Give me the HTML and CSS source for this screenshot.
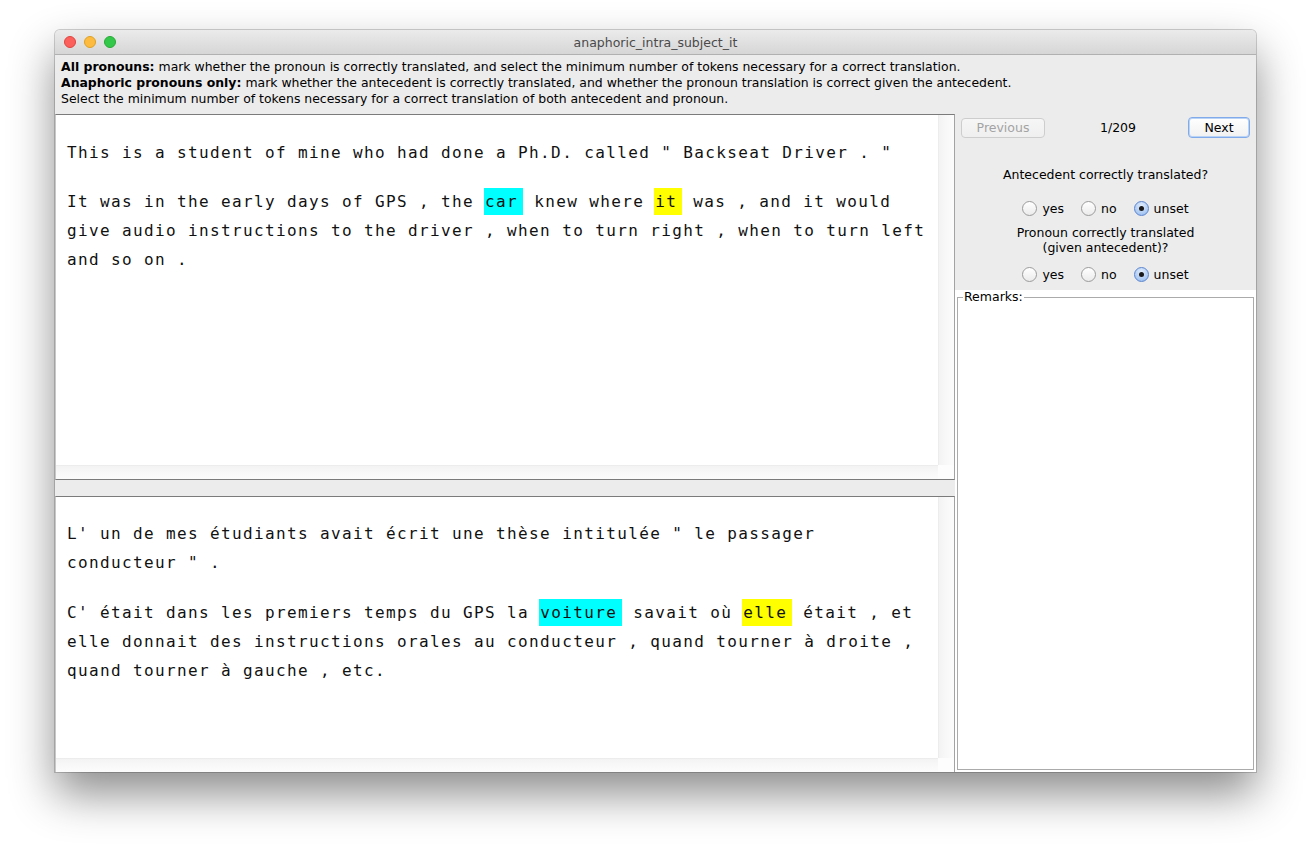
FILE: index.html
```html
<!DOCTYPE html>
<html>
<head>
<meta charset="utf-8">
<title>anaphoric_intra_subject_it</title>
<link rel="stylesheet" href="styles.css">
</head>
<body>
<div class="window">
  <div class="titlebar">
    <div class="lights">
      <span class="light red"></span>
      <span class="light yellow"></span>
      <span class="light green"></span>
    </div>
    <div class="title">anaphoric_intra_subject_it</div>
  </div>
  <div class="instructions">
    <div><b>All pronouns:</b> mark whether the pronoun is correctly translated, and select the minimum number of tokens necessary for a correct translation.</div>
    <div><b>Anaphoric pronouns only:</b> mark whether the antecedent is correctly translated, and whether the pronoun translation is correct given the antecedent.</div>
    <div>Select the minimum number of tokens necessary for a correct translation of both antecedent and pronoun.</div>
  </div>
  <div class="main">
    <div class="left">
      <div class="pane pane-top">
        <div class="pane-view">
          <div class="text text-top">
            <p>This is a student of mine who had done a Ph.D. called " Backseat Driver . "</p>
            <p>It was in the early days of GPS , the <span class="hl ante">car</span> knew where <span class="hl pron">it</span> was , and it would give audio instructions to the driver , when to turn right , when to turn left and so on .</p>
          </div>
        </div>
        <div class="vtrack"></div>
        <div class="htrack"></div>
        <div class="corner"></div>
      </div>
      <div class="divider"></div>
      <div class="pane pane-bottom">
        <div class="pane-view">
          <div class="text text-bottom">
            <p>L' un de mes étudiants avait écrit une thèse intitulée " le passager conducteur " .</p>
            <p>C' était dans les premiers temps du GPS la <span class="hl ante">voiture</span> savait où <span class="hl pron">elle</span> était , et elle donnait des instructions orales au conducteur , quand tourner à droite , quand tourner à gauche , etc.</p>
          </div>
        </div>
        <div class="vtrack"></div>
        <div class="htrack"></div>
        <div class="corner"></div>
      </div>
    </div>
    <div class="right">
      <div class="controls">
        <div class="nav">
          <button class="btn btn-prev" disabled>Previous</button>
          <span class="counter">1/209</span>
          <button class="btn btn-next">Next</button>
        </div>
        <div class="question q1">Antecedent correctly translated?</div>
        <div class="radios r1">
          <label class="radio"><span class="circle"></span>yes</label>
          <label class="radio"><span class="circle"></span>no</label>
          <label class="radio"><span class="circle on"></span>unset</label>
        </div>
        <div class="question q2">Pronoun correctly translated<br>(given antecedent)?</div>
        <div class="radios r2">
          <label class="radio"><span class="circle"></span>yes</label>
          <label class="radio"><span class="circle"></span>no</label>
          <label class="radio"><span class="circle on"></span>unset</label>
        </div>
      </div>
      <div class="remarks-wrap">
        <fieldset class="remarks">
          <legend>Remarks:</legend>
        </fieldset>
      </div>
    </div>
  </div>
</div>
</body>
</html>
```

FILE: styles.css
```css
html, body {
  margin: 0;
  padding: 0;
  background: #ffffff;
}
body {
  width: 1312px;
  height: 853px;
  overflow: hidden;
  font-family: "DejaVu Sans", "Open Sans", sans-serif;
  font-size: 12.5px;
  color: #000;
}
.window {
  margin: 30px 0 0 55px;
  width: 1201px;
  height: 742px;
  display: flex;
  flex-direction: column;
  background: #ececec;
  border-radius: 5px 5px 0 0;
  box-shadow: 0 0 0 1px rgba(0,0,0,0.18), 0 22px 45px rgba(0,0,0,0.45);
  overflow: hidden;
}
.titlebar {
  height: 24px;
  flex: none;
  display: flex;
  align-items: center;
  position: relative;
  background: linear-gradient(#ebebeb, #d6d6d6);
  border-bottom: 1px solid #b1b1b1;
}
.lights {
  display: flex;
  gap: 8px;
  padding-left: 9px;
}
.light {
  width: 12px;
  height: 12px;
  border-radius: 50%;
  box-sizing: border-box;
}
.red { background: #fc605c; border: 1px solid #e0443e; }
.yellow { background: #fdbc40; border: 1px solid #dea123; }
.green { background: #34c84a; border: 1px solid #27aa35; }
.title {
  position: absolute;
  left: 0;
  right: 0;
  text-align: center;
  font-size: 12.5px;
  color: #4a4a4a;
  pointer-events: none;
}
.instructions {
  flex: none;
  padding: 4px 6px 7px;
  line-height: 16px;
  font-size: 12.45px;
  white-space: nowrap;
}
.main {
  flex: 1;
  display: flex;
  min-height: 0;
}
.left {
  width: 900px;
  flex: none;
  display: flex;
  flex-direction: column;
}
.pane {
  display: grid;
  grid-template-columns: 1fr 16px;
  grid-template-rows: 1fr 14px;
  background: #fff;
  border-top: 1px solid #7b7b7b;
  border-right: 1px solid #a3a3a3;
  border-left: 1px solid #c8c8c8;
}
.pane-top {
  height: 364px;
  border-bottom: 1px solid #7b7b7b;
}
.pane-bottom {
  flex: 1;
}
.divider {
  height: 16px;
  background: #ececec;
}
.pane-view {
  overflow: hidden;
}
.vtrack {
  background: linear-gradient(to right, #e6e6e6 0, #f3f3f3 1px, #f8f8f8 8px, #fcfcfc 16px);
}
.htrack {
  background: linear-gradient(#e6e6e6 0, #f3f3f3 1px, #f8f8f8 7px, #fcfcfc 14px);
}
.corner {
  background: #fdfdfd;
}
.text {
  width: 864px;
  padding: 22px 0 0 11px;
  font-family: "DejaVu Sans Mono", "Liberation Mono", monospace;
  font-size: 16px;
  letter-spacing: 1.37px;
  line-height: 29px;
  color: #111;
}
.text-top {
  padding-top: 23px;
}
.text p {
  margin: 0 0 20px;
}
.text-bottom p {
  margin-bottom: 21px;
}
.hl {
  padding: 4px 5px 4px 0;
}
.ante {
  background: #00ffff;
  box-shadow: -1px 0 0 #00ffff;
}
.pron {
  background: #ffff00;
  box-shadow: -1px 0 0 #ffff00;
}
.right {
  flex: 1;
  display: flex;
  flex-direction: column;
  background: #ececec;
}
.controls {
  height: 176px;
  flex: none;
  display: flex;
  flex-direction: column;
  align-items: center;
}
.nav {
  align-self: stretch;
  display: flex;
  justify-content: space-between;
  align-items: center;
  padding: 3px 6px 0 6px;
  height: 21px;
}
.btn {
  font-family: "DejaVu Sans", sans-serif;
  font-size: 12.5px;
  border-radius: 4px;
  padding: 0;
  box-sizing: border-box;
}
.btn-prev {
  width: 84px;
  height: 20px;
  color: #a3a3a3;
  background: linear-gradient(#f6f6f6, #efefef);
  border: 1px solid #cdcdcd;
}
.btn-next {
  width: 62px;
  height: 21px;
  color: #000;
  background: linear-gradient(#ffffff, #f1f1f1);
  border: 1px solid #80aaea;
  box-shadow: inset 0 0 0 1px #b9d3f7;
}
.counter {
  font-size: 12.5px;
  padding-left: 3px;
}
.question {
  text-align: center;
  line-height: 15px;
}
.q1 { margin-top: 29px; }
.q2 { margin-top: 8px; }
.radios {
  display: flex;
  gap: 17px;
  height: 18px;
  align-items: center;
}
.r1 { margin-top: 17px; }
.r2 { margin-top: 10px; }
.radio {
  display: flex;
  align-items: center;
  gap: 5px;
}
.circle {
  width: 15px;
  height: 15px;
  box-sizing: border-box;
  border-radius: 50%;
  border: 1px solid #9b9b9b;
  background: linear-gradient(#ffffff, #ebebeb);
  position: relative;
}
.circle.on {
  border-color: #5b86cf;
  background: radial-gradient(circle at 50% 30%, #e3eefc, #a9c8f3 70%, #8ab2ec);
}
.circle.on::after {
  content: "";
  position: absolute;
  width: 5px;
  height: 5px;
  border-radius: 50%;
  background: #1a1a1a;
  left: 4px;
  top: 4px;
}
.remarks-wrap {
  flex: 1;
  background: #fff;
  display: flex;
  padding: 0 2px 2px 2px;
}
.remarks {
  flex: 1;
  margin: 0;
  padding: 0;
  border: 1px solid #ababab;
  min-width: 0;
}
.remarks legend {
  padding: 0 1px;
  margin-left: 5px;
  font-size: 12.5px;
  line-height: 14px;
}
```
